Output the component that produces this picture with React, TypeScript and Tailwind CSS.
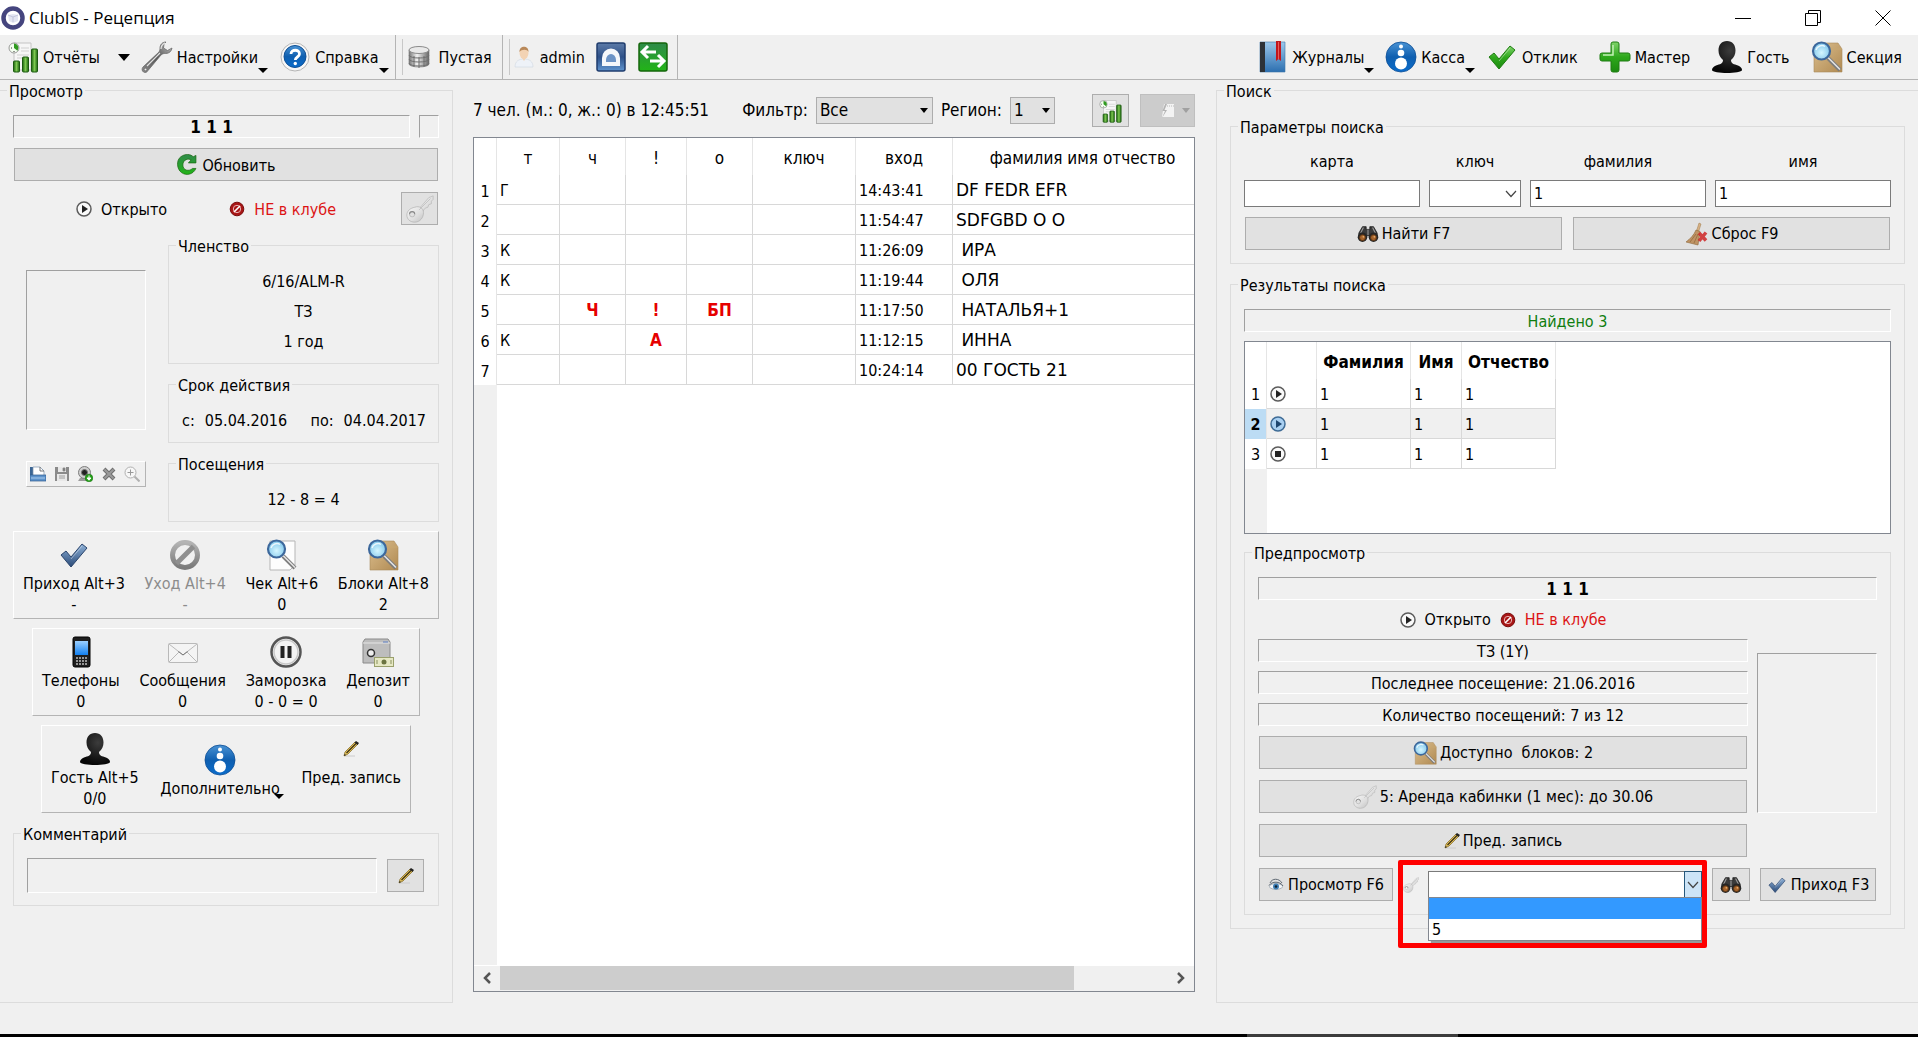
import React, { useState } from "react";
import clsx from "clsx";

type IconProps = { className?: string };

/* Gradients shared by all icons */
const IconDefs = () => (
  <svg className="absolute h-0 w-0" aria-hidden="true">
    <defs>
      <linearGradient id="gBlue" x1="0" y1="0" x2="0" y2="1">
        <stop offset="0" stopColor="#4a93d4" />
        <stop offset="0.5" stopColor="#0f5fb0" />
        <stop offset="1" stopColor="#0a6ccb" />
      </linearGradient>
      <linearGradient id="gGreen" x1="0" y1="0" x2="0" y2="1">
        <stop offset="0" stopColor="#7fd36a" />
        <stop offset="0.5" stopColor="#2ea81c" />
        <stop offset="1" stopColor="#1c8a10" />
      </linearGradient>
      <linearGradient id="gDeep" x1="0" y1="0" x2="0" y2="1">
        <stop offset="0" stopColor="#2f8a4a" />
        <stop offset="1" stopColor="#22b417" />
      </linearGradient>
      <linearGradient id="gBar" x1="0" y1="0" x2="1" y2="0">
        <stop offset="0" stopColor="#1d6310" />
        <stop offset="0.5" stopColor="#7cc850" />
        <stop offset="1" stopColor="#1d6310" />
      </linearGradient>
      <linearGradient id="gSteel" x1="0" y1="0" x2="0" y2="1">
        <stop offset="0" stopColor="#8fb2d8" />
        <stop offset="1" stopColor="#2a4a78" />
      </linearGradient>
      <linearGradient id="gNavy" x1="0" y1="0" x2="0" y2="1">
        <stop offset="0" stopColor="#5d7ba8" />
        <stop offset="0.5" stopColor="#2d5088" />
        <stop offset="1" stopColor="#5f94cf" />
      </linearGradient>
      <linearGradient id="gMetal" x1="0" y1="0" x2="1" y2="0">
        <stop offset="0" stopColor="#777" />
        <stop offset="0.4" stopColor="#f2f2f2" />
        <stop offset="1" stopColor="#666" />
      </linearGradient>
      <linearGradient id="gKey" x1="0" y1="0" x2="1" y2="1">
        <stop offset="0" stopColor="#f8f8f8" />
        <stop offset="0.6" stopColor="#dedede" />
        <stop offset="1" stopColor="#c2c2c2" />
      </linearGradient>
      <linearGradient id="gWrench" x1="1" y1="0" x2="0" y2="1">
        <stop offset="0" stopColor="#c8c8c8" />
        <stop offset="0.5" stopColor="#555" />
        <stop offset="1" stopColor="#8c8c8c" />
      </linearGradient>
      <linearGradient id="gBox" x1="0" y1="0" x2="1" y2="1">
        <stop offset="0" stopColor="#dcbf8f" />
        <stop offset="1" stopColor="#b08a52" />
      </linearGradient>
      <linearGradient id="gBook" x1="0" y1="0" x2="0" y2="1">
        <stop offset="0" stopColor="#9cc8ec" />
        <stop offset="1" stopColor="#2c6fb0" />
      </linearGradient>
      <linearGradient id="gGray" x1="0" y1="0" x2="0" y2="1">
        <stop offset="0" stopColor="#b4b4b4" />
        <stop offset="1" stopColor="#7a7a7a" />
      </linearGradient>
      <radialGradient id="gLens" cx="0.5" cy="0.6" r="0.6">
        <stop offset="0" stopColor="#d4f6ff" />
        <stop offset="1" stopColor="#7cc4ea" />
      </radialGradient>
      <linearGradient id="gScreen" x1="0" y1="0" x2="0" y2="1">
        <stop offset="0" stopColor="#9cd0ff" />
        <stop offset="1" stopColor="#1280f0" />
      </linearGradient>
      <radialGradient id="gBlack" cx="0.6" cy="0.3" r="0.7">
        <stop offset="0" stopColor="#3c3c3c" />
        <stop offset="1" stopColor="#060606" />
      </radialGradient>
    </defs>
  </svg>
);

const Svg = ({ className = "size-8", box = 32, children }: IconProps & { box?: number; children: React.ReactNode }) => (
  <svg viewBox={`0 0 ${box} ${box}`} className={clsx("shrink-0", className)} aria-hidden="true">
    {children}
  </svg>
);

const AppIcon = () => (
  <Svg className="size-6" box={24}>
    <circle cx="12" cy="12" r="9.5" fill="#fff" stroke="#45457e" strokeWidth="4.5" />
    <path d="M7 9l5-1 5 1v6l-5 2-4-2z" fill="#e4e6f2" />
    <path d="M7 9l5 2 5-2M12 11v5" stroke="#c3c6dc" fill="none" />
  </Svg>
);

const ReportIcon = ({ className }: IconProps) => (
  <Svg className={className}>
    <path d="M6 2h17v27H6z" fill="#f6f6f6" stroke="#c4c4c4" />
    <path d="M13 7h8M13 10h8M9 14h12M9 17h12" stroke="#d0d0d0" />
    <circle cx="6" cy="7" r="5" fill="#f4fff0" stroke="#9a9a9a" />
    <path d="M6 7V2.500A4.500 4.500 0 0 1 9.500 9.800z" fill="#2f9a1f" />
    <path d="M3 7h1M6 10v1" stroke="#333" />
    <rect x="5.500" y="20" width="6" height="11" rx="1" fill="url(#gBar)" stroke="#1b5a10" />
    <rect x="14.500" y="16" width="6" height="15" rx="1" fill="url(#gBar)" stroke="#1b5a10" />
    <rect x="23.500" y="8" width="6" height="23" rx="1" fill="url(#gBar)" stroke="#1b5a10" />
  </Svg>
);

const WrenchIcon = () => (
  <Svg>
    <path
      d="M25 1c-4 0-6 3-6 6 0 1.500 0 2.500-1 4L2 26c-1.500 2-1 4 .5 5s3.500.5 4.500-1.500L20 14c1.500-1.500 3-1.500 4.500-1.500 4 0 6-2.500 6.500-5.500l-4.500 2.500-4-2.500.5-4z"
      fill="url(#gWrench)"
      stroke="#6b6b6b"
      strokeWidth="0.800"
    />
    <path d="M20 8c0-3 2-5 4-6M19 12L6 25" stroke="#fff" strokeWidth="1.200" fill="none" opacity="0.800" />
    <circle cx="4.500" cy="28.500" r="1.300" fill="#eee" stroke="#555" strokeWidth="0.600" />
  </Svg>
);

const HelpIcon = () => (
  <Svg>
    <circle cx="16" cy="16" r="14" fill="#f7f7f7" stroke="#b5b5b5" />
    <circle cx="16" cy="15.500" r="11" fill="url(#gBlue)" stroke="#0f4f94" />
    <path d="M12 13c0-5 8.500-5 8.500 0 0 3-4.200 3-4.200 6" stroke="#fff" strokeWidth="2.800" fill="none" />
    <circle cx="16.300" cy="22.500" r="1.700" fill="#fff" />
  </Svg>
);

const DatabaseIcon = () => (
  <Svg className="size-6" box={24}>
    <path d="M2 5v14c0 4 20 4 20 0V5z" fill="url(#gMetal)" stroke="#777" strokeWidth="0.600" />
    <ellipse cx="12" cy="5" rx="10" ry="3.500" fill="#e9e9e9" stroke="#8a8a8a" />
    <path d="M2 10c0 4 20 4 20 0M2 14c0 4 20 4 20 0M2 18c0 4 20 4 20 0M7 11v11M12 12v11M17 11v11" stroke="#707070" fill="none" />
  </Svg>
);

const UserIcon = () => (
  <Svg className="size-6" box={24}>
    <path d="M3 22c0-6 4-8 9-8s9 2 9 8z" fill="#eef2f8" stroke="#cfd6e0" strokeWidth="0.600" />
    <ellipse cx="12" cy="8" rx="4.500" ry="6" fill="#f3d3b4" />
    <path d="M7.500 7c-.5-7 9.500-7 9 0-1-3-7-3-9 0z" fill="#b9895a" />
    <path d="M10 13l2 3 2-3" fill="#f3d3b4" />
  </Svg>
);

const LockIcon = () => (
  <Svg>
    <rect x="2" y="2" width="28" height="28" rx="2" fill="url(#gNavy)" stroke="#1f3c6d" strokeWidth="1.500" />
    <path d="M7 25V17a9 9.500 0 0 1 18 0v8z" fill="#f5f7fb" />
    <path d="M11 19a5 6 0 0 1 10 0v2H11z" fill="#6c93c6" />
  </Svg>
);

const SwapIcon = () => (
  <Svg>
    <rect x="2" y="2" width="28" height="28" rx="2" fill="url(#gDeep)" stroke="#14650b" strokeWidth="1.500" />
    <path d="M5 11h14M11 5l-6 6 6 6M27 20H13M21 14l6 6-6 6" stroke="#fff" strokeWidth="3" fill="none" />
  </Svg>
);

const BookIcon = () => (
  <Svg>
    <path d="M4 1h25v30H4z" fill="url(#gBook)" stroke="#3c75aa" strokeWidth="0.600" />
    <path d="M4 1h5v30H4z" fill="#2d3238" />
    <path d="M20 0h5v20l-2.500-2-2.500 2z" fill="#c3161c" />
    <path d="M22.500 1v17" stroke="#ef6d6d" strokeWidth="0.800" />
  </Svg>
);

const InfoIcon = () => (
  <Svg>
    <circle cx="16" cy="16" r="15" fill="url(#gBlue)" stroke="#0b4d94" strokeWidth="0.800" />
    <circle cx="16" cy="5.500" r="2" fill="#fff" />
    <circle cx="16" cy="12" r="3.300" fill="#fff" />
    <circle cx="16" cy="22.500" r="6" fill="#fff" />
  </Svg>
);

const CheckIcon = ({ className, blue }: IconProps & { blue?: boolean }) => (
  <Svg className={className}>
    <path
      d="M3 16l5-4 5 6L24 5l5 4-16 19z"
      fill={blue ? "url(#gSteel)" : "url(#gGreen)"}
      stroke={blue ? "#2b456c" : "#1f7d12"}
      strokeLinejoin="round"
    />
    <path d="M24 7L13 20" stroke="#fff" opacity="0.400" />
  </Svg>
);

const PlusIcon = () => (
  <Svg>
    <path
      d="M12 3q0-2 2-2h4q2 0 2 2v9h9q2 0 2 2v4q0 2-2 2h-9v9q0 2-2 2h-4q-2 0-2-2v-9H3q-2 0-2-2v-4q0-2 2-2h9z"
      fill="url(#gGreen)"
      stroke="#1f7d12"
    />
    <path d="M14 4v10H4" stroke="#c4f0b6" strokeWidth="1.500" fill="none" />
  </Svg>
);

const GuestIcon = () => (
  <Svg>
    <path
      d="M16 0c5.500 0 8.500 4 8.500 9.500 0 4-1.500 7-4.500 9.500 0 4 3 4 7 5.500 3 1.200 4 3 4 4.500 0 2-8 3-15 3s-15-1-15-3c0-1.500 1-3.300 4-4.500 4-1.500 7-1.500 7-5.500-3-2.500-4.500-5.500-4.500-9.500C7.500 4 10.500 0 16 0z"
      fill="url(#gBlack)"
    />
  </Svg>
);

const Magnifier = () => (
  <g>
    <path d="M17 17l12 12" stroke="#7b7b7b" strokeWidth="4" />
    <path d="M17 16.500l12 12" stroke="#e4e4e4" strokeWidth="1.600" />
    <circle cx="10.500" cy="10" r="8.500" fill="url(#gLens)" stroke="#3d689c" strokeWidth="2.200" />
    <path d="M5 9c1-4 6-5.500 9-3.500" stroke="#fff" strokeWidth="1.500" fill="none" opacity="0.800" />
  </g>
);

const BoxSearchIcon = ({ className }: IconProps) => (
  <Svg className={className}>
    <path d="M3 8l10-6h14l4 6v23H3z" fill="url(#gBox)" stroke="#a98a5c" strokeWidth="0.600" />
    <path d="M3 8h28M14 2l3 6" stroke="#c9a870" fill="none" />
    <Magnifier />
  </Svg>
);

const PageSearchIcon = () => (
  <Svg>
    <path d="M4 2h25v24l-5 5H4z" fill="#fdfdfd" stroke="#b5b5b5" />
    <Magnifier />
  </Svg>
);

const RefreshIcon = () => (
  <Svg className="size-[22px]">
    <path d="M29 2v11H18l4-4.500C18 6 10 8 10 16c0 8 9 10 14 5h5c-4 9-14 11-21 6S0 9 7 4s14-4 18 0z" fill="url(#gDeep)" stroke="#14650b" />
  </Svg>
);

const PlayIcon = ({ className = "size-4", kind = "play" }: IconProps & { kind?: "play" | "selected" | "stop" }) => (
  <Svg className={className} box={16}>
    <circle cx="8" cy="8" r="7" fill={kind === "selected" ? "#a9d0f2" : "#fafafa"} stroke={kind === "selected" ? "#3f6c96" : "#5c5c5c"} strokeWidth="1.500" />
    {kind === "stop" ? (
      <path d="M5 5h6v6H5z" fill="#222" />
    ) : (
      <path d="M6 4l6 4-6 4z" fill={kind === "selected" ? "#1d4670" : "#222"} />
    )}
  </Svg>
);

const DenyIcon = () => (
  <Svg className="size-4" box={16}>
    <circle cx="8" cy="8" r="6.800" fill="#a81616" stroke="#7a0d0d" />
    <circle cx="8" cy="8" r="3.700" fill="none" stroke="#e9b4b4" />
    <path d="M5 11l6-6" stroke="#fff" strokeWidth="1.600" />
  </Svg>
);

const BanIcon = () => (
  <Svg>
    <circle cx="16" cy="16" r="12.500" fill="none" stroke="url(#gGray)" strokeWidth="5" />
    <path d="M7.500 24.500l17-17" stroke="#8f8f8f" strokeWidth="5" />
  </Svg>
);

const KeyIcon = ({ className = "size-7" }: IconProps) => (
  <Svg className={className}>
    <path d="M13 18L26 3l5-2v4l-2 2v3l-3 1-1 3-3 1-4 5z" fill="url(#gKey)" stroke="#b8b8b8" strokeWidth="0.800" />
    <path
      fillRule="evenodd"
      d="M10 14c5-2 10 1 10 6 0 6-4 11-10 11-5 0-9-3-9-8s4-8 9-9zM7 19a3 3 0 1 0 0 6 3 3 0 1 0 0-6z"
      fill="url(#gKey)"
      stroke="#b0b0b0"
      strokeWidth="0.800"
    />
    <path d="M4 22a3 3 0 0 1 6 0" fill="none" stroke="#8a8a8a" strokeWidth="1.200" />
    <path d="M15 17L28 4" stroke="#b8b8b8" strokeWidth="0.800" />
  </Svg>
);

const PencilIcon = () => (
  <Svg className="size-4" box={16}>
    <path d="M2 15h10" stroke="#ccc" />
    <path d="M1 15l1-4L12 1l3 2L5 13z" fill="#e5c35c" stroke="#7d6420" strokeWidth="0.700" />
    <path d="M3.500 12L13 2.500" stroke="#3a2f14" strokeWidth="1.200" />
    <path d="M11.500 1.500l1.500-1.500 3 2-1.500 2z" fill="#222" />
    <path d="M1 15l.6-2L3 14z" fill="#222" />
  </Svg>
);

const PhoneIcon = () => (
  <Svg>
    <rect x="8" y="1" width="17" height="30" rx="2" fill="#1e1e1e" stroke="#000" />
    <rect x="10" y="5" width="13" height="14" fill="url(#gScreen)" />
    <path d="M11 22h11M11 25h11M11 28h11" stroke="#bdbdbd" strokeWidth="1.500" strokeDasharray="2 1" />
  </Svg>
);

const MailIcon = () => (
  <Svg>
    <rect x="1.500" y="7.500" width="29" height="19" rx="1" fill="#f4f4f4" stroke="#b9b9b9" />
    <path d="M2 8l14 11L30 8M2 26l10-10M30 26L20 16" fill="none" stroke="#b9b9b9" />
    <path d="M11.500 15.500l4.500 3.500 4.500-3.500" fill="none" stroke="#777" />
  </Svg>
);

const PauseIcon = () => (
  <Svg>
    <circle cx="16" cy="16" r="14.500" fill="#f3f3f3" stroke="#555" strokeWidth="2.500" />
    <circle cx="16" cy="16" r="12" fill="none" stroke="#c8c8c8" strokeWidth="1.500" />
    <path d="M10.500 10h4v12h-4zM17.500 10h4v12h-4z" fill="#222" />
  </Svg>
);

const SafeIcon = () => (
  <Svg>
    <path d="M3 3h23l2 3v21H1V6z" fill="#bdbdbd" stroke="#8a8a8a" />
    <path d="M1 7h27" stroke="#e6e6e6" />
    <circle cx="9" cy="17" r="3.500" fill="#eee" stroke="#333" strokeWidth="1.500" />
    <path d="M21 6h5" stroke="#5c7fc4" />
    <rect x="12.500" y="21.500" width="19" height="9" fill="#e6e8c4" stroke="#9aa06c" />
    <circle cx="22" cy="26" r="2.500" fill="#6b7441" />
    <path d="M15 24v4M29 24v4" stroke="#8a9160" />
  </Svg>
);

const BinocularsIcon = () => (
  <Svg className="size-[22px]" box={24}>
    <path d="M6 4h4v3h4V4h4l4 7v3H2v-3z" fill="#3b3b3b" stroke="#111" strokeWidth="0.800" />
    <path d="M7 5L4 11M17 5l3 6M12 7v6" stroke="#9a9a9a" strokeWidth="1.200" />
    <circle cx="6" cy="15.500" r="5.200" fill="#262626" />
    <circle cx="18" cy="15.500" r="5.200" fill="#262626" />
    <circle cx="6" cy="16" r="3.200" fill="#a5642c" stroke="#5c3413" />
    <circle cx="18" cy="16" r="3.200" fill="#a5642c" stroke="#5c3413" />
    <circle cx="7" cy="15" r="1" fill="#e3a869" />
    <circle cx="19" cy="15" r="1" fill="#e3a869" />
  </Svg>
);

const BroomIcon = () => (
  <Svg className="size-6" box={24}>
    <path d="M14 1l2 1-2.500 8-2-1z" fill="#d8b184" stroke="#9c7849" strokeWidth="0.500" />
    <path d="M11 8l4 1.500L13 23 1 20C5 17 9 13 11 8z" fill="#bf9364" stroke="#8c6638" strokeWidth="0.600" />
    <path d="M11 12L5 20M13 12l-4 9" stroke="#8c6638" strokeWidth="0.700" />
    <path d="M14 11l7 7.500M21 10.500l-7 8.500" stroke="#cf2626" strokeWidth="3.500" opacity="0.850" />
  </Svg>
);

const EyeIcon = () => (
  <Svg className="size-4" box={16}>
    <path d="M1 9.500c3-4 11-4 14 0-3 4-11 4-14 0z" fill="#f4f7fa" stroke="#98a2ac" strokeWidth="0.800" />
    <path d="M2 6c2-5 9-5 12 0M1 8.500c3-4.500 11-4.500 14 .5" fill="none" stroke="#5f6973" />
    <circle cx="8" cy="9.500" r="3" fill="#3f7fb5" />
    <circle cx="8" cy="9.500" r="1.300" fill="#0e2233" />
  </Svg>
);

const ScriptIcon = () => (
  <Svg className="size-4" box={16}>
    <path d="M5 1h10v13H3z" fill="#f3f3f3" />
    <path d="M6 1L3.500 8h2.500l-3 7 5-8H5.500L8 1z" fill="#b4b4b4" />
    <path d="M6 3h9" stroke="#bbb" strokeDasharray="1 1" />
  </Svg>
);

const OpenFileIcon = () => (
  <Svg className="size-4" box={16}>
    <path d="M0 1h6l1 2h6v6H0z" fill="#3c6694" />
    <path d="M3 1h7l4 4v6H3z" fill="#fff" stroke="#7c93ad" strokeWidth="0.700" />
    <path d="M10 1v4h4" fill="none" stroke="#555" strokeWidth="0.800" />
    <path d="M0 9h16v6H0z" fill="#5e93cb" stroke="#2c5a8c" strokeWidth="0.700" />
    <path d="M1 12h14" stroke="#a8cbed" />
  </Svg>
);

const SaveIcon = () => (
  <Svg className="size-4" box={16}>
    <path d="M1 1h14v14H1z" fill="#8a8a8a" />
    <path d="M4 1h8v5H4zM3 8h10v7H3z" fill="#e8e8e8" />
    <path d="M9 2h2v3H9zM5 10h6M5 12h6" stroke="#8a8a8a" fill="#777" strokeWidth="0.800" />
  </Svg>
);

const CameraIcon = () => (
  <Svg className="size-4" box={16}>
    <path d="M1 15l2-3h8l2 3z" fill="#9b9b9b" />
    <circle cx="7.500" cy="6.500" r="6" fill="#cfcfcf" stroke="#7d7d7d" />
    <circle cx="7.500" cy="6.500" r="3" fill="#222" stroke="#777" />
    <circle cx="12" cy="12" r="3.800" fill="#27a31b" stroke="#12700a" strokeWidth="0.600" />
    <path d="M12 9.500v3M10 12l2 2.200 2-2.200z" stroke="#fff" fill="#fff" />
  </Svg>
);

const CrossIcon = () => (
  <Svg className="size-4" box={16}>
    <path d="M3 3l10 10M13 3L3 13" stroke="#6e6e6e" strokeWidth="4" />
    <path d="M3.500 3.500l9 9M12.500 3.500l-9 9" stroke="#9a9a9a" strokeWidth="2" />
  </Svg>
);

const ZoomInIcon = () => (
  <Svg className="size-4" box={16}>
    <circle cx="6.500" cy="6.500" r="5.500" fill="#f7f7f7" stroke="#b0b0b0" />
    <path d="M6.500 3.500v6M3.500 6.500h6" stroke="#999" />
    <path d="M10.500 10.500l5 5" stroke="#b0b0b0" strokeWidth="2" />
  </Svg>
);

const Caret = ({ className = "w-[10px]" }: IconProps) => (
  <svg viewBox="0 0 10 5" preserveAspectRatio="none" className={clsx("h-[5px]", className)} aria-hidden="true">
    <path d="M0 0h10L5 5z" fill="currentColor" />
  </svg>
);

const Chevron = ({ className }: IconProps) => (
  <svg viewBox="0 0 12 12" className={clsx("size-3", className)} aria-hidden="true">
    <path d="M1 3l5 5.500L11 3" fill="none" stroke="#444" strokeWidth="1.200" />
  </svg>
);

/* ---------- Shared widgets ---------- */

const sunken = "border border-t-[#a0a0a0] border-l-[#a0a0a0] border-r-white border-b-white";
const raised = "border border-t-white border-l-white border-r-[#b4b4b4] border-b-[#b4b4b4]";
const button = "flex h-[33px] items-center justify-center border border-[#adadad] bg-[#e1e1e1]";

type GroupProps = { title: string; className?: string; body?: string; children: React.ReactNode };

const Group = ({ title, className, body = "pt-[13px]", children }: GroupProps) => (
  <fieldset className={clsx("min-w-0 border border-[#dcdcdc]", className)}>
    <legend className="ml-[7px] px-[2px] pt-[3px] leading-5">{title}</legend>
    <div className={body}>{children}</div>
  </fieldset>
);

const Field = ({ className, children }: { className?: string; children?: React.ReactNode }) => (
  <div className={clsx("h-[23px] text-center leading-[23px]", sunken, className)}>{children}</div>
);

const ToolButton = ({ icon, label, menu }: { icon: React.ReactNode; label: string; menu?: boolean }) => (
  <button type="button" className="relative flex items-center gap-1 pr-[10px]">
    {icon}
    <span className="pt-[2px]">{label}</span>
    {menu && <Caret className="absolute right-0 bottom-0 w-[10px]" />}
  </button>
);

type Action = { icon: React.ReactNode; label: string; value?: string; disabled?: boolean; menu?: boolean; top?: boolean };

const ActionBar = ({ items, className }: { items: Action[]; className?: string }) => (
  <div className={clsx("mt-[9px] flex justify-between px-[9px] pt-[7px] pb-[3px]", raised, className)}>
    {items.map((a) => (
      <button
        key={a.label}
        type="button"
        disabled={a.disabled}
        className={clsx("relative flex flex-col items-center leading-[21px]", a.top ? "self-start" : "self-center", a.disabled && "text-[#8c8c8c]")}
      >
        <span className="mb-[2px] flex size-8 items-center justify-center">{a.icon}</span>
        <span>{a.label}</span>
        {a.value && <span>{a.value}</span>}
        {a.menu && <Caret className="absolute -right-1 bottom-0 w-[10px]" />}
      </button>
    ))}
  </div>
);

/* ---------- Top of the window ---------- */

const TitleBar = () => (
  <header className="flex h-[35px] items-center bg-white pl-[1px] font-['Open_Sans',sans-serif]">
    <AppIcon />
    <h1 className="ml-1 text-[17px]">ClubIS - Рецепция</h1>
    <div className="ml-auto flex h-full">
      <button type="button" aria-label="Свернуть" className="flex w-[70px] items-center justify-center">
        <svg viewBox="0 0 16 16" className="size-4"><path d="M0 8.500h16" stroke="#000" /></svg>
      </button>
      <button type="button" aria-label="Развернуть" className="flex w-[70px] items-center justify-center">
        <svg viewBox="0 0 16 16" className="size-4"><path d="M.5 3.500h12v12H.5zM3.500 3.500v-3h12v12h-3" fill="none" stroke="#000" /></svg>
      </button>
      <button type="button" aria-label="Закрыть" className="flex w-[70px] items-center justify-center">
        <svg viewBox="0 0 16 16" className="size-4"><path d="M.5.5l15 15M15.500.5l-15 15" stroke="#000" /></svg>
      </button>
    </div>
  </header>
);

const Handle = () => <span className="my-1 ml-[6px] w-px bg-[#c8c8c8]" />;

const Toolbar = () => (
  <nav className="flex h-[45px] border-b border-[#b4b4b4]">
    <div className="flex items-center gap-[11px] border-r border-[#b4b4b4] pr-[6px] pl-2">
      <button type="button" className="flex items-center gap-[3px]">
        <ReportIcon />
        <span className="pt-[2px]">Отчёты</span>
        <svg viewBox="0 0 12 7" className="ml-[15px] h-[7px] w-3"><path d="M0 0h12L6 7z" /></svg>
      </button>
      <ToolButton icon={<WrenchIcon />} label="Настройки" menu />
      <ToolButton icon={<HelpIcon />} label="Справка" menu />
    </div>
    <div className="flex border-r border-[#b4b4b4] pr-[10px]">
      <Handle />
      <button type="button" className="ml-1 flex items-center gap-2">
        <DatabaseIcon />
        <span className="pt-[2px]">Пустая</span>
      </button>
    </div>
    <div className="flex border-r border-[#b4b4b4] pr-2">
      <Handle />
      <div className="ml-[2px] flex items-center gap-[10px]">
        <button type="button" className="flex items-center gap-1">
          <UserIcon />
          <span className="pt-[2px]">admin</span>
        </button>
        <button type="button" aria-label="Заблокировать"><LockIcon /></button>
        <button type="button" aria-label="Сменить пользователя"><SwapIcon /></button>
      </div>
    </div>
    <div className="ml-auto flex items-center gap-[11px] pr-[6px]">
      <ToolButton icon={<BookIcon />} label="Журналы" menu />
      <ToolButton icon={<InfoIcon />} label="Касса" menu />
      <ToolButton icon={<CheckIcon />} label="Отклик" />
      <ToolButton icon={<PlusIcon />} label="Мастер" />
      <ToolButton icon={<GuestIcon />} label="Гость" />
      <ToolButton icon={<BoxSearchIcon />} label="Секция" />
    </div>
  </nav>
);

/* ---------- Left: client card ---------- */

const actions: Action[] = [
  { icon: <CheckIcon blue />, label: "Приход Alt+3", value: "-" },
  { icon: <BanIcon />, label: "Уход Alt+4", value: "-", disabled: true },
  { icon: <PageSearchIcon />, label: "Чек Alt+6", value: "0" },
  { icon: <BoxSearchIcon />, label: "Блоки Alt+8", value: "2" },
];

const extras: Action[] = [
  { icon: <PhoneIcon />, label: "Телефоны", value: "0" },
  { icon: <MailIcon />, label: "Сообщения", value: "0" },
  { icon: <PauseIcon />, label: "Заморозка", value: "0 - 0 = 0" },
  { icon: <SafeIcon />, label: "Депозит", value: "0" },
];

const guestActions: Action[] = [
  { icon: <GuestIcon />, label: "Гость Alt+5", value: "0/0" },
  { icon: <InfoIcon />, label: "Дополнительно", menu: true },
  { icon: <PencilIcon />, label: "Пред. запись", top: true },
];

const photoTools = [
  { label: "Открыть", icon: <OpenFileIcon /> },
  { label: "Сохранить", icon: <SaveIcon /> },
  { label: "Камера", icon: <CameraIcon /> },
  { label: "Удалить", icon: <CrossIcon /> },
  { label: "Увеличить", icon: <ZoomInIcon /> },
];

const ClientCard = () => (
  <Group title="Просмотр" className="border-l-0" body="px-[13px] pt-[13px]">
    <div className="flex gap-[9px]">
      <Field className="flex-1 text-[17px] font-bold">1 1 1</Field>
      <Field className="w-5" />
    </div>
    <div className="mt-[10px] px-px">
      <button type="button" className={clsx(button, "w-full gap-1")}>
        <RefreshIcon />
        <span className="pt-[2px]">Обновить</span>
      </button>
      <div className="mt-[11px] flex items-center">
        <p className="flex flex-1 items-center gap-[9px] pl-[62px]"><PlayIcon /><span className="pt-[2px]">Открыто</span></p>
        <p className="flex items-center gap-[9px] pr-[65px] text-[#dc1414]"><DenyIcon /><span className="pt-[2px]">НЕ в клубе</span></p>
        <button type="button" aria-label="Ключ" className={clsx(button, "w-[37px]")}><KeyIcon /></button>
      </div>
    </div>

    <div className="mt-[9px] flex gap-[22px]">
      <div className="ml-[13px] w-[120px] pt-9">
        <div className={clsx("h-40", sunken)} />
        <div className={clsx("mt-[31px] flex h-[26px] items-center justify-between pr-[5px] pl-[3px]", raised)}>
          {photoTools.map((t) => (
            <button key={t.label} type="button" aria-label={t.label}>{t.icon}</button>
          ))}
        </div>
      </div>
      <div className="flex flex-1 flex-col gap-[9px] leading-5">
        <Group title="Членство" body="flex flex-col gap-[10px] pt-[15px] pb-[11px] text-center">
          <p>6/16/ALM-R</p>
          <p>ТЗ</p>
          <p>1 год</p>
        </Group>
        <Group title="Срок действия" body="flex justify-between pt-[15px] pr-3 pb-[11px] pl-[13px]">
          <p className="flex gap-[10px]"><span>с:</span>05.04.2016</p>
          <p className="flex gap-[10px]"><span>по:</span>04.04.2017</p>
        </Group>
        <Group title="Посещения" body="pt-[15px] pb-[11px] text-center">
          <p>12 - 8 = 4</p>
        </Group>
      </div>
    </div>

    <ActionBar items={actions} />
    <ActionBar items={extras} className="mx-[19px]" />
    <ActionBar items={guestActions} className="mx-7" />

    <Group title="Комментарий" className="mt-[9px]" body="flex items-center gap-[10px] pt-[13px] pr-[14px] pb-3 pl-[13px]">
      <input aria-label="Комментарий" className={clsx("h-[35px] min-w-0 flex-1 bg-transparent px-1 outline-none", sunken)} />
      <button type="button" aria-label="Изменить комментарий" className={clsx(button, "w-[37px]")}><PencilIcon /></button>
    </Group>
  </Group>
);

/* ---------- Middle: visitors ---------- */

const visitors = [
  { type: "Г", time: "14:43:41", name: "DF FEDR EFR" },
  { time: "11:54:47", name: "SDFGBD O O" },
  { type: "К", time: "11:26:09", name: " ИРА" },
  { type: "К", time: "11:19:44", name: " ОЛЯ" },
  { ch: "Ч", mark: "!", o: "БП", time: "11:17:50", name: " НАТАЛЬЯ+1" },
  { type: "К", mark: "А", time: "11:12:15", name: " ИННА" },
  { time: "10:24:14", name: "00 ГОСТЬ 21" },
];

const columns = [
  { title: "т", width: "w-[63px]" },
  { title: "ч", width: "w-[66px]" },
  { title: "!", width: "w-[61px]" },
  { title: "о", width: "w-[66px]" },
  { title: "ключ", width: "w-[103px]" },
  { title: "вход", width: "w-[97px]" },
  { title: "фамилия имя отчество", width: "w-[260px]" },
];

const headCell = "border-r border-[#e5e5e5] pt-1 text-[17px]";
const cell = "border-r border-b border-[#d8d8d8] px-[3px] pt-[3px]";
const flag = "text-center text-[17px] font-bold text-[#e60000]";

const Visitors = () => (
  <section className="flex min-w-0 flex-col pr-[21px] pb-[42px] pl-5">
    <div className="mt-[15px] flex h-[33px] items-center">
      <p className="mr-auto text-[17px]">7 чел. (м.: 0, ж.: 0) в 12:45:51</p>
      <label htmlFor="filter" className="mr-2 text-[17px]">Фильтр:</label>
      <div className="relative">
        <select id="filter" className="h-[27px] w-[117px] appearance-none border border-[#adadad] bg-[#e1e1e1] px-[3px] text-[17px]">
          <option>Все</option>
        </select>
        <Caret className="pointer-events-none absolute top-[11px] right-[5px] w-2" />
      </div>
      <label htmlFor="region" className="mr-2 ml-2 text-[17px]">Регион:</label>
      <div className="relative">
        <select id="region" className="h-[27px] w-[45px] appearance-none border border-[#adadad] bg-[#e1e1e1] px-[3px] text-[17px]">
          <option>1</option>
        </select>
        <Caret className="pointer-events-none absolute top-[11px] right-[5px] w-2" />
      </div>
      <button type="button" aria-label="Отчёт" className={clsx(button, "ml-[37px] w-[37px]")}>
        <ReportIcon className="size-6" />
      </button>
      <button type="button" disabled aria-label="Сценарии" className="ml-[11px] flex h-[33px] w-[55px] items-center justify-end gap-[7px] border border-[#bfbfbf] bg-[#cccccc] pr-1">
        <ScriptIcon />
        <Caret className="w-2 text-[#a0a0a0]" />
      </button>
    </div>

    <div className="mt-[10px] flex flex-1 flex-col border border-[#828790] bg-white">
      <div className="relative flex-1 overflow-hidden">
        <div className="flex h-full flex-col">
          <table className="w-max table-fixed border-separate border-spacing-0">
            <thead>
              <tr className="h-[37px]">
                <th className="w-[23px] border-r border-[#e5e5e5]" aria-label="№" />
                {columns.map((c) => (
                  <th key={c.title} className={clsx(headCell, "font-normal", c.width)}>{c.title}</th>
                ))}
              </tr>
            </thead>
            <tbody>
              {visitors.map((v, i) => (
                <tr key={v.time} className="h-[30px]">
                  <th scope="row" className="border-r border-[#e5e5e5] pt-[3px] font-normal">{i + 1}</th>
                  <td className={cell}>{v.type}</td>
                  <td className={clsx(cell, flag)}>{v.ch}</td>
                  <td className={clsx(cell, flag)}>{v.mark}</td>
                  <td className={clsx(cell, flag)}>{v.o}</td>
                  <td className={cell} />
                  <td className={cell}>{v.time}</td>
                  <td className={clsx(cell, "font-['DejaVu_Sans',sans-serif] text-[17px] whitespace-pre")}>{v.name}</td>
                </tr>
              ))}
            </tbody>
          </table>
          <div className="w-[23px] flex-1 bg-[#f0f0f0]" />
        </div>
      </div>
      <div className="mt-px flex h-[25px] bg-[#f0f0f0] pb-px">
        <button type="button" aria-label="Прокрутить влево" className="flex w-[26px] items-center justify-center">
          <svg viewBox="0 0 10 12" className="h-3 w-[10px]"><path d="M8 1L3 6l5 5" fill="none" stroke="#555" strokeWidth="2.500" /></svg>
        </button>
        <div className="flex-1">
          <div className="h-full w-[86%] bg-[#cdcdcd]" />
        </div>
        <button type="button" aria-label="Прокрутить вправо" className="flex w-[26px] items-center justify-center">
          <svg viewBox="0 0 10 12" className="h-3 w-[10px]"><path d="M2 1l5 5-5 5" fill="none" stroke="#555" strokeWidth="2.500" /></svg>
        </button>
      </div>
    </div>
  </section>
);

/* ---------- Right: search ---------- */

const results = ["play", "selected", "stop"] as const;
const input = "block h-[27px] w-full min-w-0 appearance-none border border-[#7a7a7a] bg-white px-[3px] outline-none";

const KeyCombo = () => {
  const [open, setOpen] = useState(true);
  const [value, setValue] = useState("");

  const pick = (v: string) => {
    setValue(v);
    setOpen(false);
  };

  return (
    <div className="relative flex flex-1 items-center gap-[9px]">
      <KeyIcon className="size-4" />
      <div className="relative flex h-[27px] flex-1 border border-[#7a7a7a] bg-white">
        <input
          role="combobox"
          aria-label="Номер ключа"
          aria-expanded={open}
          aria-controls="key-list"
          value={value}
          onChange={(e) => setValue(e.target.value)}
          className="min-w-0 flex-1 px-[3px] outline-none"
        />
        <button
          type="button"
          aria-label="Список ключей"
          onClick={() => setOpen(!open)}
          className="-m-px flex w-[18px] items-center justify-center border border-[#26587c] bg-[#cce4f7]"
        >
          <Chevron />
        </button>
        {open && (
          <ul id="key-list" role="listbox" className="absolute top-[25px] -right-px -left-px z-10 border border-[#828790] bg-white leading-[21px] shadow-[3px_2px_1px_#999]">
            <li role="option" aria-selected="true" onClick={() => pick("")} className="h-[21px] bg-[#3399ff]" />
            <li role="option" aria-selected="false" onClick={() => pick("5")} className="h-[21px] px-[3px]">5</li>
          </ul>
        )}
      </div>
      <div className="pointer-events-none absolute -top-[11px] -right-[5px] -left-[5px] z-20 h-[88px] rounded-xs border-[5px] border-[#ff0000]" />
    </div>
  );
};

const SearchPanel = () => (
  <Group title="Поиск" className="border-r-0" body="px-[13px] pt-[13px]">
    <Group title="Параметры поиска" body="px-[13px] py-[13px]">
      <div className="grid grid-cols-[176fr_92fr_176fr_176fr] gap-x-[9px] gap-y-2 pt-px text-center leading-5">
        <label htmlFor="card">карта</label>
        <label htmlFor="key">ключ</label>
        <label htmlFor="surname">фамилия</label>
        <label htmlFor="name">имя</label>
        <input id="card" className={input} />
        <div className="relative">
          <select id="key" className={input}>
            <option />
          </select>
          <Chevron className="pointer-events-none absolute top-2 right-1" />
        </div>
        <input id="surname" defaultValue="1" className={input} />
        <input id="name" defaultValue="1" className={input} />
      </div>
      <div className="mt-[10px] grid grid-cols-2 gap-[11px] px-px">
        <button type="button" className={clsx(button, "gap-[3px]")}><BinocularsIcon /><span className="pt-px">Найти F7</span></button>
        <button type="button" className={clsx(button, "gap-[3px]")}><BroomIcon /><span className="pt-px">Сброс F9</span></button>
      </div>
    </Group>

    <Group title="Результаты поиска" className="mt-[9px]" body="px-[13px] py-[13px]">
      <Field className="text-[#0f7d0f]">Найдено 3</Field>
      <div className="mt-[9px] flex h-[193px] flex-col border border-[#828790] bg-white">
        <table className="w-max table-fixed border-separate border-spacing-0">
          <thead>
            <tr className="h-[37px]">
              <th className="w-[22px] border-r border-[#e5e5e5]" aria-label="№" />
              <th className="w-[50px] border-r border-[#e5e5e5]" aria-label="Статус" />
              <th className={clsx(headCell, "w-[94px]")}>Фамилия</th>
              <th className={clsx(headCell, "w-[51px]")}>Имя</th>
              <th className={clsx(headCell, "w-[94px]")}>Отчество</th>
            </tr>
          </thead>
          <tbody>
            {results.map((kind, i) => (
              <tr key={kind} className={clsx("h-[30px]", kind === "selected" && "bg-[#f0f0f0]")}>
                <th scope="row" className={clsx("border-r border-[#e5e5e5] pt-[2px]", kind === "selected" ? "bg-[#bcdcf4]" : "font-normal")}>{i + 1}</th>
                <td className="border-r border-b border-[#d8d8d8] px-[3px]"><PlayIcon kind={kind} /></td>
                <td className={cell}>1</td>
                <td className={cell}>1</td>
                <td className={cell}>1</td>
              </tr>
            ))}
          </tbody>
        </table>
        <div className="w-[22px] flex-1 bg-[#f0f0f0]" />
      </div>

      <Group title="Предпросмотр" className="mt-[7px]" body="px-[13px] py-[13px]">
        <Field className="text-[17px] font-bold">1 1 1</Field>
        <div className="mt-[10px] flex items-center justify-center gap-[9px] pr-[129px] leading-5">
          <PlayIcon />
          <span>Открыто</span>
          <DenyIcon />
          <span className="text-[#dc1414]">НЕ в клубе</span>
        </div>
        <div className="mt-[9px] flex gap-[9px]">
          <div className="flex flex-1 flex-col gap-[9px]">
            <Field>ТЗ (1Y)</Field>
            <Field>Последнее посещение: 21.06.2016</Field>
            <Field>Количество посещений: 7 из 12</Field>
            <div className="mt-px flex flex-col gap-[11px] px-px">
              <button type="button" className={clsx(button, "gap-[3px] whitespace-pre")}>
                <BoxSearchIcon className="size-6" />
                <span className="pt-px">{"Доступно  блоков: 2"}</span>
              </button>
              <button type="button" className={clsx(button, "gap-[3px]")}>
                <KeyIcon className="size-6" />
                <span className="pt-px">5: Аренда кабинки (1 мес): до 30.06</span>
              </button>
              <button type="button" className={clsx(button, "gap-[3px]")}>
                <PencilIcon />
                <span className="pt-px">Пред. запись</span>
              </button>
            </div>
          </div>
          <div className={clsx("mt-[14px] h-40 w-[120px]", sunken)} />
        </div>
        <div className="mt-[11px] flex items-center gap-[10px] px-px">
          <button type="button" className={clsx(button, "w-[134px] gap-1")}><EyeIcon /><span className="pt-px">Просмотр F6</span></button>
          <KeyCombo />
          <button type="button" aria-label="Найти ключ" className={clsx(button, "w-[38px]")}><BinocularsIcon /></button>
          <button type="button" className={clsx(button, "w-[116px] gap-1")}>
            <CheckIcon blue className="size-5" />
            <span className="pt-px">Приход F3</span>
          </button>
        </div>
      </Group>
    </Group>
  </Group>
);

const App = () => (
  <div className="flex min-h-screen flex-col bg-[#f0f0f0] font-['DejaVu_Sans_Condensed','DejaVu_Sans',sans-serif] text-base whitespace-nowrap text-black">
    <IconDefs />
    <TitleBar />
    <Toolbar />
    <main className="-mt-px grid flex-1 grid-cols-[453fr_763fr_702fr]">
      <div className="flex flex-col pb-[31px] *:flex-1">
        <ClientCard />
      </div>
      <Visitors />
      <div className="flex flex-col pb-[31px] *:flex-1">
        <SearchPanel />
      </div>
    </main>
    <div className="flex h-[3px] bg-black">
      <div className="ml-[65%] w-[11%] bg-[#3c3c3c]" />
    </div>
  </div>
);

export default App;
